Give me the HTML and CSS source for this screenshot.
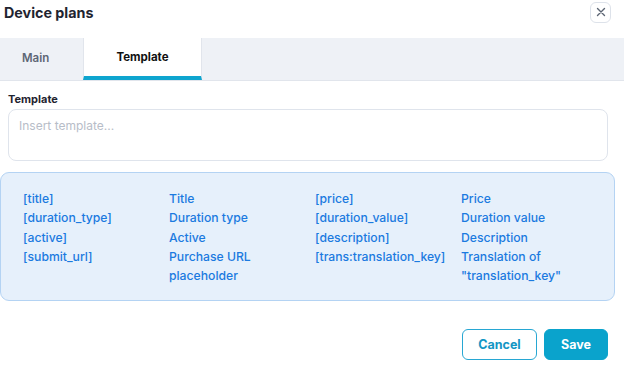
FILE: index.html
```html
<!DOCTYPE html>
<html lang="en">
<head>
    <meta charset="UTF-8">
    <meta name="viewport" content="width=device-width, initial-scale=1.0">
    <title>Device plans</title>
    <link rel="stylesheet" href="styles.css">
</head>
<body>
    <div class="modal">
        <div class="modal-header">
            <h2 class="modal-title">Device plans</h2>
            <button class="close-btn" aria-label="Close">
                <svg width="10" height="10" viewBox="0 0 10 10">
                    <path d="M1.5 1.5 L8.5 8.5 M8.5 1.5 L1.5 8.5" stroke="#5b6472" stroke-width="1.4" stroke-linecap="round"/>
                </svg>
            </button>
        </div>

        <div class="tabs">
            <div class="tab">Main</div>
            <div class="tab active">Template</div>
        </div>

        <div class="modal-body">
            <label class="field-label">Template</label>
            <textarea class="template-input" placeholder="Insert template..."></textarea>

            <div class="placeholders">
                <div class="ph-col">
                    <span>[title]</span>
                    <span>[duration_type]</span>
                    <span>[active]</span>
                    <span>[submit_url]</span>
                </div>
                <div class="ph-col">
                    <span>Title</span>
                    <span>Duration type</span>
                    <span>Active</span>
                    <span>Purchase URL<br>placeholder</span>
                </div>
                <div class="ph-col">
                    <span>[price]</span>
                    <span>[duration_value]</span>
                    <span>[description]</span>
                    <span>[trans:translation_key]</span>
                </div>
                <div class="ph-col">
                    <span>Price</span>
                    <span>Duration value</span>
                    <span>Description</span>
                    <span>Translation of<br>"translation_key"</span>
                </div>
            </div>
        </div>

        <div class="modal-footer">
            <button class="btn btn-outline">Cancel</button>
            <button class="btn btn-primary">Save</button>
        </div>
    </div>
</body>
</html>
```

FILE: styles.css
```css
body {
    margin: 0;
    font-family: 'Inter', 'Liberation Sans', sans-serif;
    background-color: #fff;
    color: #1d2330;
}

.modal {
    width: 624px;
}

/* ヘッダー */
.modal-header {
    display: flex;
    justify-content: space-between;
    align-items: center;
    height: 24px;
    padding: 0 13px 0 4px;
    margin-top: 0;
}

.modal-title {
    margin: 0;
    font-size: 14.3px;
    font-weight: 700;
    color: #1f2430;
}

.close-btn {
    width: 21px;
    height: 21px;
    padding: 0;
    display: flex;
    align-items: center;
    justify-content: center;
    background: #fff;
    border: 1px solid #dde2ea;
    border-radius: 6px;
    cursor: pointer;
}

/* タブ */
.tabs {
    display: flex;
    margin-top: 14px;
    height: 42px;
    background-color: #eef1f6;
    border-bottom: 1px solid #e1e5ec;
}

.tab {
    display: flex;
    align-items: center;
    font-size: 11.5px;
    font-weight: 600;
    color: #5d6675;
    width: 83px;
    box-sizing: border-box;
    padding: 0 0 2px 22px;
}

.tab.active {
    width: 119px;
    justify-content: center;
    background-color: #fff;
    color: #111;
    font-weight: 700;
    border-left: 1px solid #e1e5ec;
    border-right: 1px solid #e1e5ec;
    border-bottom: 4px solid #0ea5cf;
    padding: 0;
}

/* 本体 */
.modal-body {
    padding: 11px 9px 0 0;
}

.field-label {
    display: block;
    margin-left: 8px;
    font-size: 11px;
    font-weight: 700;
    color: #1f2430;
}

.template-input {
    display: block;
    box-sizing: border-box;
    width: 600px;
    height: 52px;
    margin: 3px 0 0 8px;
    padding: 8px 10px;
    border: 1px solid #dfe4ec;
    border-radius: 8px;
    resize: none;
    font-family: inherit;
    font-size: 12px;
    outline: none;
}

.template-input::placeholder {
    color: #b7bdc8;
}

.placeholders {
    display: grid;
    grid-template-columns: 146px 146px 146px 1fr;
    margin-top: 11px;
    padding: 16px 10px 15px 22px;
    background-color: #e6f0fb;
    border: 1px solid #b4d3f3;
    border-radius: 9px;
}

.ph-col {
    display: flex;
    flex-direction: column;
}

.ph-col span {
    font-size: 12.2px;
    font-weight: 500;
    line-height: 19.3px;
    color: #1b7ae0;
}

/* フッター */
.modal-footer {
    display: flex;
    justify-content: flex-end;
    gap: 7px;
    padding: 28px 16px 0 0;
}

.btn {
    height: 31px;
    border-radius: 6px;
    font-family: inherit;
    font-size: 12.5px;
    font-weight: 700;
    cursor: pointer;
}

.btn-outline {
    width: 75px;
    background: #fff;
    color: #1496c4;
    border: 1px solid #27a7d3;
}

.btn-primary {
    width: 64px;
    background: #0aa3cc;
    color: #fff;
    border: 1px solid #0aa3cc;
}
```
